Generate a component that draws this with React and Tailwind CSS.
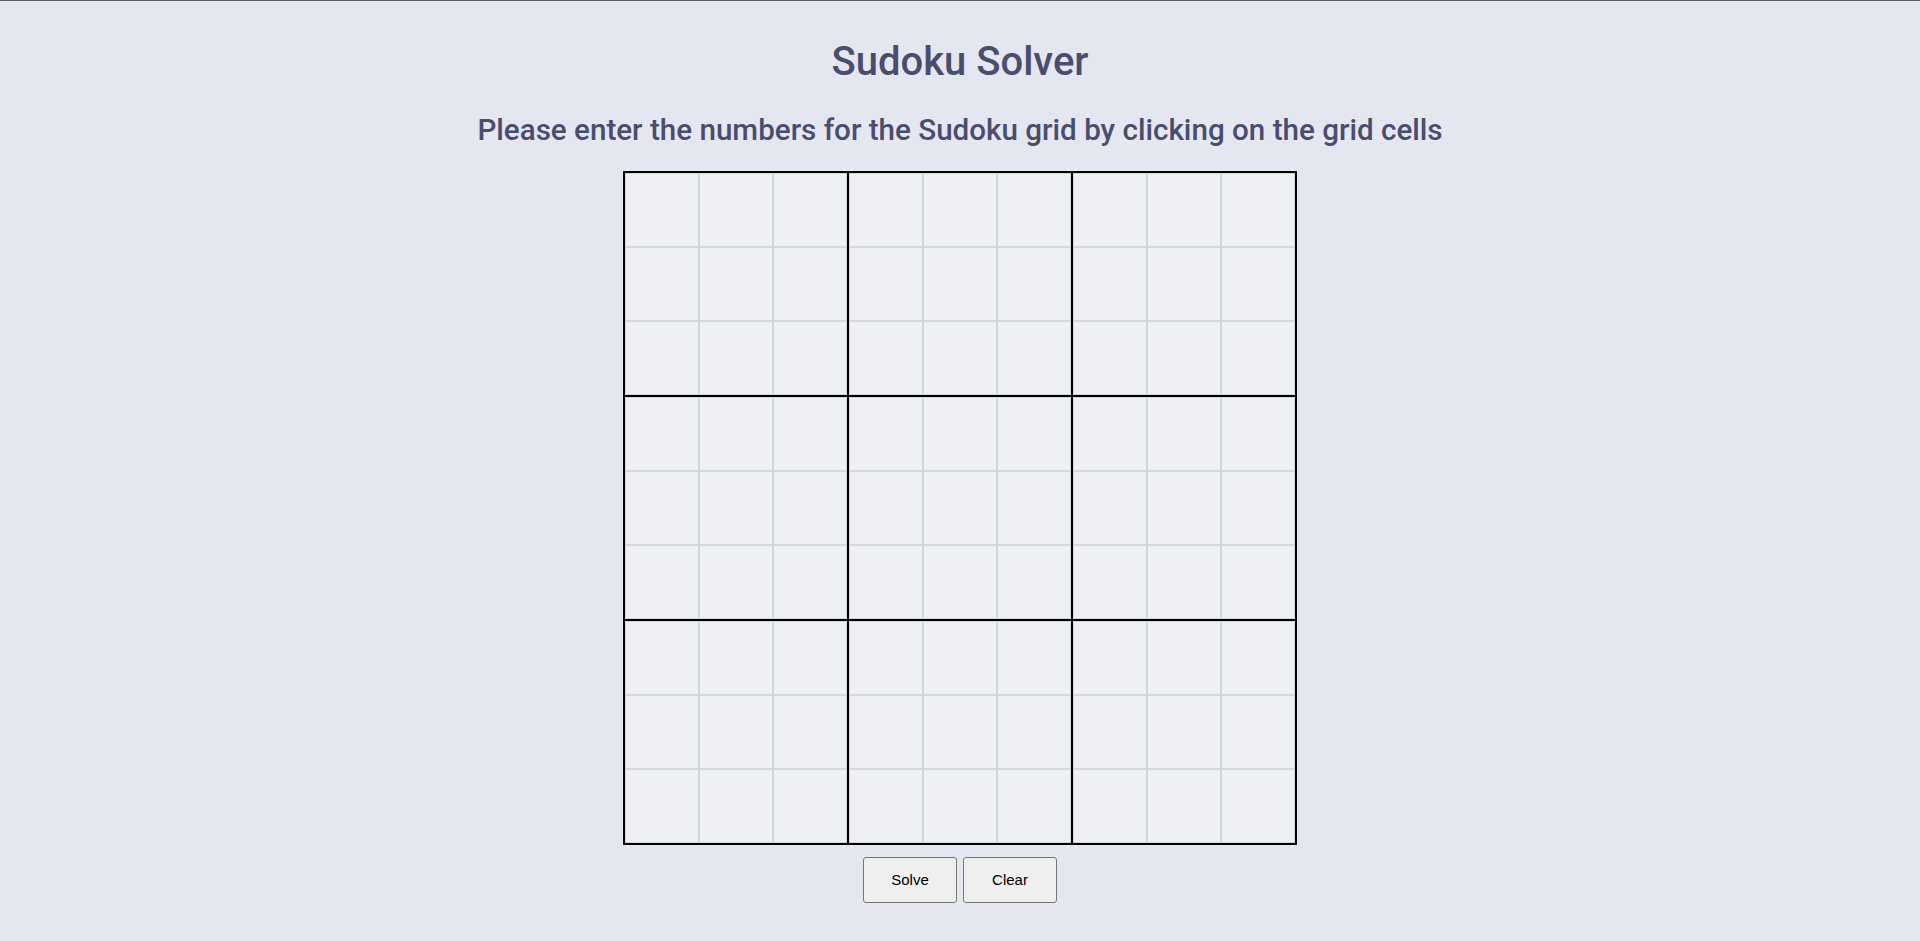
import React from "react";

export default function App() {
  const blocks = Array.from({ length: 9 });
  const cells = Array.from({ length: 9 });
  return (
    <div className="min-h-[941px] w-full bg-[#e4e7f0] border-t border-[#5a5a5a] flex flex-col items-center" style={{ fontFamily: "Roboto, 'Noto Sans', sans-serif" }}>
      <h1 className="mt-[37px] text-[40px] leading-[48px] font-medium text-[#4a4d6c]">Sudoku Solver</h1>
      <h2 className="mt-[26px] text-[29.6px] leading-[36px] font-medium text-[#4a4d6c]">
        Please enter the numbers for the Sudoku grid by clicking on the grid cells
      </h2>
      <div className="mt-[23px] border-2 border-black bg-black grid grid-cols-3 gap-[2px]">
        {blocks.map((_, b) => (
          <div key={b} className="grid grid-cols-3">
            {cells.map((_, c) => (
              <input
                key={c}
                type="text"
                maxLength={1}
                className="w-[74px] h-[74px] border border-[#d3d6e0] bg-[#eff0f4] text-center text-2xl outline-none"
              />
            ))}
          </div>
        ))}
      </div>
      <div className="mt-[12px] flex gap-[6px]" style={{ fontFamily: "'Liberation Sans', Arial, sans-serif" }}>
        <button className="w-[94px] h-[46px] border border-[#767676] rounded-[3px] bg-[#efefef] text-[15px] text-black">Solve</button>
        <button className="w-[94px] h-[46px] border border-[#767676] rounded-[3px] bg-[#efefef] text-[15px] text-black">Clear</button>
      </div>
    </div>
  );
}
